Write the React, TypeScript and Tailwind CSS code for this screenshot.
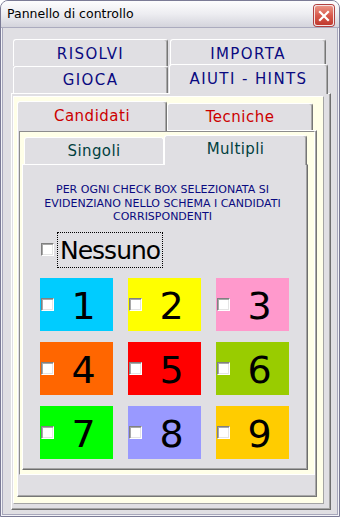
import React from 'react';

function Check({ className = '' }: { className?: string }) {
  return (
    <div
      className={
        'w-[13px] h-[13px] shrink-0 bg-white border border-t-[#808080] border-l-[#808080] border-r-white border-b-white shadow-[inset_1px_1px_0_#a8a8a8,inset_-1px_-1px_0_#e4e4e4] ' +
        className
      }
    />
  );
}

const cells = [
  { n: '1', bg: 'bg-[#00ccff]' },
  { n: '2', bg: 'bg-[#ffff00]' },
  { n: '3', bg: 'bg-[#ff99cc]' },
  { n: '4', bg: 'bg-[#ff6600]' },
  { n: '5', bg: 'bg-[#ff0000]' },
  { n: '6', bg: 'bg-[#99cc00]' },
  { n: '7', bg: 'bg-[#00ff00]' },
  { n: '8', bg: 'bg-[#9999ff]' },
  { n: '9', bg: 'bg-[#ffcc00]' },
];

const tabBase =
  'flex items-center justify-center bg-[#e0dfe3] border-t border-l border-r border-t-white border-l-white border-r-[#767676] rounded-t-[3px] shadow-[inset_-1px_0_0_#a8a8a8]';

export default function App() {
  return (
    <div className="w-[340px] h-[517px] font-['DejaVu_Sans',sans-serif]">
      <div className="w-[340px] h-[517px] flex flex-col rounded-t-[8px] border border-[#7b7b96] bg-[#e0dfe3] overflow-hidden">
        {/* Title bar */}
        <div className="h-[27px] shrink-0 flex items-center justify-between pl-[6px] pr-[5px] bg-gradient-to-b from-[#fdfdfe] via-[#ededf1] to-[#d4d4dc] border-b border-[#ababbe]">
          <span className="text-[12.5px] text-black leading-none mt-[1px]">Pannello di controllo</span>
          <div className="w-[20px] h-[21px] mt-[3px] rounded-[3px] border border-[#f4e4e4] bg-gradient-to-b from-[#ea9486] via-[#d8594c] to-[#c03a2e] shadow-[0_0_0_1px_#b04040] flex items-center justify-center">
            <svg width="12" height="12" viewBox="0 0 12 12">
              <path d="M2 2 L10 10 M10 2 L2 10" stroke="white" strokeWidth="2.2" strokeLinecap="square" />
            </svg>
          </div>
        </div>
        {/* Body */}
        <div className="flex-1 flex flex-col border-x border-b border-[#f3f3f7]">
          <div className="flex-1 flex flex-col border-x border-b border-[#a8a8bc] pl-[8px] pr-[6px] pt-[11px] pb-[4px]">
            {/* L1 tabs */}
            <div className="flex pl-[2px] h-[27px] shrink-0 text-[15px] tracking-[1.4px] text-[#0a0a80]">
              <div className={tabBase + ' w-[155px] h-[27px] pt-[3px]'}>RISOLVI</div>
              <div className={tabBase + ' ml-[2px] w-[156px] h-[27px] pt-[3px]'}>IMPORTA</div>
            </div>
            <div className="flex pl-[2px] h-[27px] shrink-0 text-[15px] tracking-[1.4px] text-[#0a0a80]">
              <div className={tabBase + ' w-[155px] h-[27px]'}>GIOCA</div>
              <div className={tabBase + ' relative z-10 ml-[1px] -mt-[2px] w-[159px] h-[30px] pb-[1px]'}>AIUTI - HINTS</div>
            </div>
            {/* L1 panel */}
            <div className="flex-1 flex flex-col bg-[#e0dfe3] border-t border-l border-white border-r border-b border-r-[#6e6e6e] border-b-[#6e6e6e] shadow-[inset_-1px_-1px_0_#a4a4a4] pl-[1px] pt-[2px] pr-[6px] pb-[5px]">
              {/* cream frame */}
              <div className="flex-1 flex flex-col bg-[#ffffe8] border-t border-l border-white border-r border-b border-r-[#a4a4a4] border-b-[#a4a4a4] pl-[3px] pt-[4px] pr-[6px] pb-[6px]">
                {/* L2 tabs */}
                <div className="flex h-[29px] shrink-0 text-[15px] tracking-[0.5px] text-[#cc0000]">
                  <div className={tabBase + ' relative z-10 w-[150px] h-[30px] pb-[1px]'}>Candidati</div>
                  <div className={tabBase + ' mt-[2px] w-[146px] h-[27px]'}>Tecniche</div>
                </div>
                {/* L2 panel */}
                <div className="flex-1 flex flex-col bg-[#e0dfe3] border-t border-l border-white border-r border-b border-r-[#767676] border-b-[#767676] shadow-[inset_-1px_-1px_0_#a8a8a8] pl-[1px] pr-[1px]">
                  {/* L3 container */}
                  <div className="h-[344px] flex flex-col bg-[#ffffe8] border-t border-l border-[#8c8c8c] border-r border-b border-r-white border-b-white pl-[2px] pt-[3px] pr-[6px] pb-[4px]">
                    {/* L3 tabs */}
                    <div className="flex h-[29px] shrink-0 text-[15px] tracking-[0.4px] text-[#004040]">
                      <div className="ml-[2px] mt-[2px] w-[140px] h-[27px] flex items-center justify-center bg-[#e0dfe3] border-t border-l border-r border-white rounded-t-[3px]">
                        Singoli
                      </div>
                      <div className={tabBase + ' relative z-10 w-[143px] h-[30px] pb-[2px]'}>Multipli</div>
                    </div>
                    {/* L3 panel */}
                    <div className="flex-1 flex flex-col bg-[#e0dfe3] border-t border-l border-white border-r border-b border-r-[#6e6e6e] border-b-[#6e6e6e] shadow-[inset_-1px_-1px_0_#a4a4a4]">
                      <div className="pt-[18px] pr-[5px] text-center text-[11px] leading-[13.5px] text-[#0a0a80]">
                        PER OGNI CHECK BOX SELEZIONATA SI
                        <br />
                        EVIDENZIANO NELLO SCHEMA I CANDIDATI
                        <br />
                        CORRISPONDENTI
                      </div>
                      <div className="mt-[8px] pl-[18px] flex items-center">
                        <Check />
                        <div className="ml-[3px] h-[36px] px-[2px] flex items-center border border-dotted border-black">
                          <span className="text-[25px] leading-none tracking-[-1px] text-black pt-[2px]">Nessuno</span>
                        </div>
                      </div>
                      <div className="mt-[10px] pl-[17px] grid grid-cols-[73px_73px_73px] gap-x-[15px] gap-y-[11px]">
                        {cells.map((c) => (
                          <div key={c.n} className={'h-[53px] flex items-center ' + c.bg}>
                            <Check className="ml-[1px]" />
                            <span className="flex-1 text-center text-[38px] leading-none text-black mt-[4px]">{c.n}</span>
                          </div>
                        ))}
                      </div>
                    </div>
                  </div>
                </div>
              </div>
            </div>
          </div>
        </div>
      </div>
    </div>
  );
}
